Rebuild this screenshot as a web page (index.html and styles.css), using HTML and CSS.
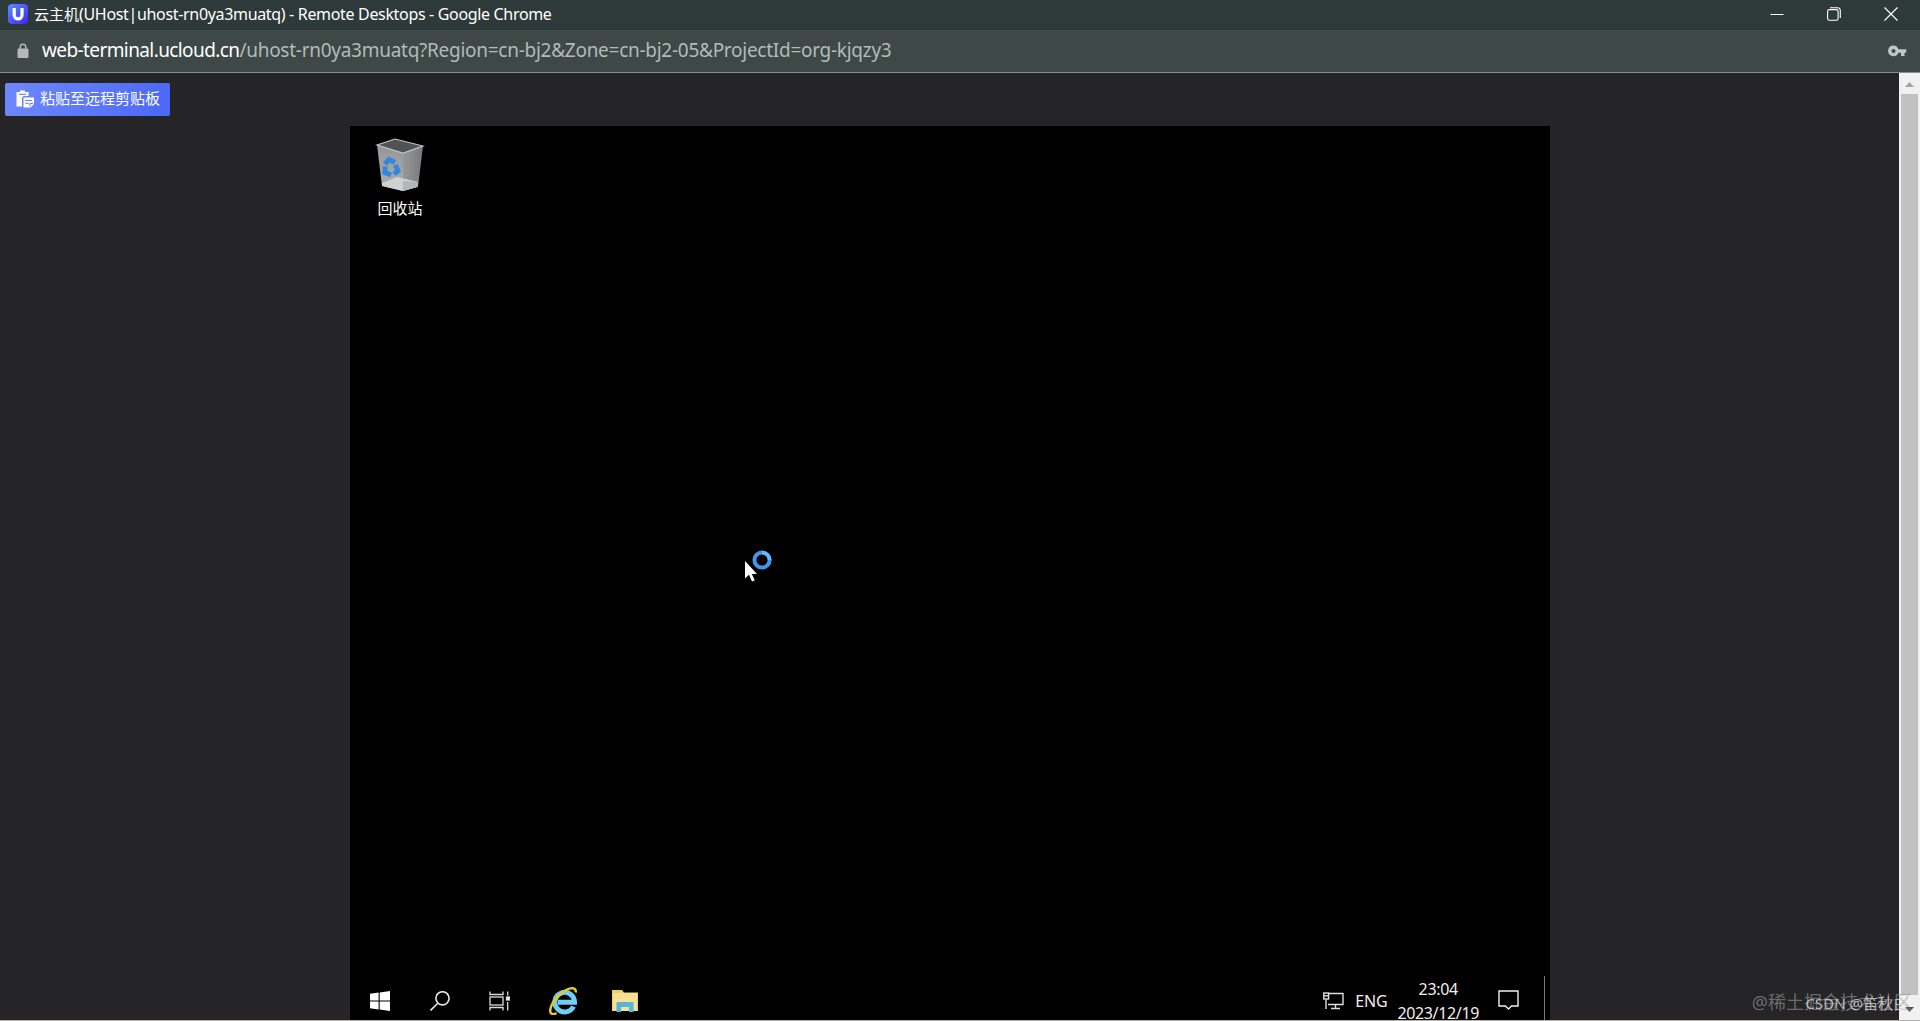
FILE: index.html
```html
<!DOCTYPE html>
<html lang="zh-CN">
<head>
  <meta charset="UTF-8">
  <title>云主机(UHost|uhost-rn0ya3muatq) - Remote Desktops</title>
  <link rel="stylesheet" href="styles.css">
</head>
<body>

  <div class="window">
    <header class="titlebar">
      <svg class="favicon" width="20" height="20" viewBox="0 0 20 20">
        <defs>
          <linearGradient id="logo" x1="0" y1="0" x2="1" y2="1">
            <stop offset="0" stop-color="#5c8cff"/>
            <stop offset="1" stop-color="#3a28f0"/>
          </linearGradient>
        </defs>
        <rect width="20" height="20" rx="4" fill="url(#logo)"/>
        <path d="M6.2 4v7a3.9 3.9 0 0 0 7.8 0V4" fill="none" stroke="#fff" stroke-width="3.2"/>
      </svg>
      <span class="title"><span class="title-zh">云主机</span><span class="title-en">(UHost|uhost-rn0ya3muatq) - Remote Desktops - Google Chrome</span></span>
      <div class="controls">
        <svg width="14" height="14" viewBox="0 0 14 14"><path d="M0.500 7.500h13" stroke="#fff" stroke-width="1"/></svg>
        <svg width="14" height="14" viewBox="0 0 14 14" fill="none" stroke="#fff" stroke-width="1.100"><rect x="0.600" y="2.600" width="10.500" height="10.700" rx="1.800"/><path d="M3 0.700h7.500a2.800 2.800 0 0 1 2.800 2.800v7.500"/></svg>
        <svg width="14" height="14" viewBox="0 0 14 14"><path d="M0.500 0.500l13 13M13.500 0.500l-13 13" stroke="#fff" stroke-width="1.200"/></svg>
      </div>
    </header>

    <div class="addressbar">
      <svg class="lock" width="12" height="16" viewBox="0 0 12 16">
        <rect x="0.500" y="5.500" width="11" height="9.500" rx="1.300" fill="#b2b9b9"/>
        <path d="M3.200 6V4a2.800 2.800 0 0 1 5.600 0v2" fill="none" stroke="#b2b9b9" stroke-width="1.500"/>
      </svg>
      <span class="url"><span class="host">web-terminal.ucloud.cn</span><span class="path">/uhost-rn0ya3muatq?Region=cn-bj2&amp;Zone=cn-bj2-05&amp;ProjectId=org-kjqzy3</span></span>
      <svg class="key" width="19" height="12" viewBox="0 0 19 12">
        <path fill="#c0c5c5" fill-rule="evenodd" d="M5.500 0.500a5.300 5.300 0 1 0 4.900 7.200H13V11h3.500V7.700h1.700V4.300h-7.800A5.300 5.300 0 0 0 5.500 0.500zM5.500 4a2 2 0 1 1 0 4 2 2 0 0 1 0-4z"/>
      </svg>
    </div>

    <main class="page">
      <div class="content">
        <button class="paste-btn">
          <svg width="19" height="18" viewBox="0 0 19 18">
            <path fill="#fff" d="M0.500 2h3.500V0.500h5V2h3.500v4H7.500L6 7.500v9H0.500z"/>
            <path d="M3 4.300h7" stroke="#6680fa" stroke-width="1.100"/>
            <path fill="#fff" d="M7.500 7.500H18v6.500l-3.500 3.500h-7z"/>
            <path d="M9.300 10.500h6.500M9.300 13.300h3.500M14 16.500v-3h3" fill="none" stroke="#5d78fa" stroke-width="1"/>
          </svg>
          <span>粘贴至远程剪贴板</span>
        </button>

        <section class="desktop">
          <div class="recycle">
            <svg width="50" height="56" viewBox="0 0 50 56">
              <defs>
                <linearGradient id="binLeft" x1="0" y1="0" x2="0" y2="1">
                  <stop offset="0" stop-color="#949698"/>
                  <stop offset="1" stop-color="#adb0b2"/>
                </linearGradient>
                <linearGradient id="binRight" x1="0" y1="0" x2="1" y2="0">
                  <stop offset="0" stop-color="#96989a"/>
                  <stop offset="1" stop-color="#77797c"/>
                </linearGradient>
              </defs>
              <path d="M2 7L28 15 28 53 7 48z" fill="url(#binLeft)"/>
              <path d="M28 15L48 8 43 49 28 53z" fill="url(#binRight)"/>
              <path d="M2 7L20 1 48 8 28 15z" fill="#505254" stroke="#c4c6c8" stroke-width="1.200"/>
              <path d="M7 45L22 39 43 44 42 49 28 53 7 48z" fill="#cfd1d3"/>
              <path d="M28 43v10l14-4 1-5z" fill="#b4b7b9"/>
              <g fill="none" stroke="#3088dc" stroke-width="5">
                <path d="M10 26l4-4.500 6 3"/>
                <path d="M20.500 27l2.500 6-4 3"/>
                <path d="M16 37l-6-2.500v-6"/>
              </g>
            </svg>
            <span>回收站</span>
          </div>

          <!-- busy pointer -->
          <svg class="cursor" width="30" height="34" viewBox="0 0 30 34">
            <circle cx="18" cy="11" r="7.600" fill="none" stroke="#4197ec" stroke-width="4"/>
            <path d="M18 3.400a7.600 7.600 0 0 1 7.600 7.600" fill="none" stroke="#64bafa" stroke-width="3.500"/>
            <path d="M1 12v17.500l4-3.700 3 6.700 2.800-1.300-3-6.200H13z" fill="#fff"/>
          </svg>

          <div class="taskbar">
            <div class="apps">
              <svg width="20" height="20" viewBox="0 0 20 20" fill="#fff"><path d="M0 2.800l8.600-1.200v7.900H0zM9.700 1.400L20 0v9.500H9.700zM0 10.600h8.600v7.900L0 17.300zM9.700 10.600H20V20L9.700 18.600z"/></svg>
              <svg width="20" height="20" viewBox="0 0 20 20" fill="none" stroke="#e6e6e6" stroke-width="1.600"><circle cx="12.500" cy="7.300" r="6.600"/><path d="M7.800 12.200L0.500 19.500"/></svg>
              <svg width="21" height="20" viewBox="0 0 21 20" fill="none" stroke="#dcdcdc" stroke-width="1.300"><path d="M1 0.500v3h13v-3M1 19.500v-3h13v3"/><rect x="1" y="6" width="13" height="8"/><path d="M18.700 0.500v4M18.700 11v8.500"/><rect x="17.500" y="6" width="3" height="3" fill="#fff"/></svg>
              <svg width="28" height="28" viewBox="0 0 28 28">
                <path d="M24.500 19.500a9.800 9.800 0 1 1 1-4.300H9" fill="none" stroke="#71cdf6" stroke-width="5"/>
                <path d="M7.500 26C4.500 28 0.500 27.500 1.300 22.500 2.500 15 10 6.500 17.500 2.800 21.500 0.800 27.500 0 26.700 5.500" fill="none" stroke="#e5c821" stroke-width="2.500"/>
              </svg>
              <svg width="28" height="24" viewBox="0 0 28 24">
                <path d="M1 1h10l2 2.500h14V22H1z" fill="#efcd69"/>
                <path d="M2 4h24v18H2z" fill="#f9df93"/>
                <path d="M5.500 23V13h17v10H18v-5h-8v5z" fill="#55b5df"/>
              </svg>
            </div>
            <div class="tray">
              <svg width="21" height="18" viewBox="0 0 21 18" fill="none" stroke="#dedede" stroke-width="1.400"><path d="M6 1.500h14v11H5M12.500 12.500v4M8 16.500h9M3 7.500V17"/><rect x="0.800" y="1" width="4.800" height="6"/><path d="M1 3.800h4"/></svg>
              <span class="lang">ENG</span>
              <div class="clock"><span>23:04</span><span>2023/12/19</span></div>
              <svg width="21" height="21" viewBox="0 0 21 21" fill="none" stroke="#f0f0f0" stroke-width="1.400"><path d="M1 1h19v15h-6.500L10.500 19l-3-3H1z"/></svg>
            </div>
            <span class="peek"></span>
          </div>
        </section>
      </div>

      <div class="scrollbar">
        <svg width="9" height="5" viewBox="0 0 9 5"><path d="M4.500 0L9 5H0z" fill="#a3a3a3"/></svg>
        <div class="thumb"></div>
        <svg width="9" height="5" viewBox="0 0 9 5"><path d="M0 0h9L4.500 5z" fill="#505050"/></svg>
      </div>
    </main>
  </div>

  <span class="mark mark-juejin">@稀土掘金技术社区</span>
  <span class="mark mark-csdn">CSDN @笛秋白</span>

</body>
</html>
```

FILE: styles.css
```css
* {
  box-sizing: border-box;
}

body {
  margin: 0;
  overflow: hidden;
  background: #252527;
  color: #fff;
  font-family: "Noto Sans", "Noto Sans CJK SC", sans-serif;
}

svg {
  display: block;
  flex: none;
}

.window {
  display: flex;
  flex-direction: column;
  height: 1021px;
  border-bottom: 1px solid #b5b2ad;
}

.titlebar {
  display: flex;
  align-items: center;
  height: 30px;
  padding: 0 22px 2px 8px;
  background: #2e3939;
}

.title {
  display: flex;
  align-items: center;
  margin-left: 6px;
  font-size: 16px;
  line-height: 20px;
  white-space: nowrap;
}

.title-zh {
  font-size: 15px;
}

.title-en {
  letter-spacing: -0.33px;
}

.controls {
  display: flex;
  gap: 43px;
  margin-left: auto;
}

.addressbar {
  display: flex;
  align-items: center;
  height: 43px;
  padding: 0 13px 0 17px;
  background: #3d4847;
  border-bottom: 1px solid #8a8e8e;
}

.url {
  margin-left: 13px;
  padding-bottom: 2px;
  font-size: 19px;
  line-height: 24px;
  white-space: nowrap;
}

.host {
  letter-spacing: -0.6px;
}

.path {
  color: #b3baba;
  letter-spacing: -0.27px;
}

.key {
  margin-left: auto;
}

.page {
  display: flex;
  flex: 1;
  min-height: 0;
}

.content {
  display: flex;
  flex: 1;
  flex-direction: column;
  padding: 10px 0 0 5px;
}

.paste-btn {
  display: flex;
  align-items: center;
  align-self: flex-start;
  gap: 5px;
  width: 165px;
  height: 33px;
  padding: 0 0 2px 11px;
  border: none;
  border-radius: 2px;
  background: linear-gradient(100deg, #6e88fb, #4b68f8);
  color: #fff;
  font-family: "Noto Sans CJK SC", sans-serif;
  font-size: 15px;
  white-space: nowrap;
}

.paste-btn span {
  padding-bottom: 2px;
}

.desktop {
  position: relative;
  display: flex;
  flex: 1;
  flex-direction: column;
  justify-content: space-between;
  width: 1200px;
  margin: 10px 0 0 345px;
  background: #000;
}

.recycle {
  display: flex;
  flex-direction: column;
  align-items: center;
  width: 100px;
  padding-top: 12px;
  font-size: 15px;
  line-height: 20px;
}

.recycle span {
  margin-top: 4px;
}

.cursor {
  position: absolute;
  left: 394px;
  top: 423px;
}

.taskbar {
  display: flex;
  height: 44px;
}

.apps {
  display: flex;
  align-items: center;
  padding: 5px 0 0 20px;
}

.apps svg:nth-child(2) {
  margin-left: 40px;
}

.apps svg:nth-child(3) {
  margin-left: 39px;
}

.apps svg:nth-child(4) {
  margin-left: 39px;
}

.apps svg:nth-child(5) {
  margin-left: 34px;
}

.tray {
  display: flex;
  align-items: center;
  margin-left: auto;
  padding-top: 5px;
}

.lang {
  margin-left: 11px;
  color: #eee;
  font-size: 16px;
  letter-spacing: -0.2px;
}

.clock {
  display: flex;
  flex-direction: column;
  align-items: center;
  margin: 0 19px 0 10px;
  color: #eee;
  font-size: 16px;
  letter-spacing: -0.35px;
  line-height: 24px;
}

.peek {
  width: 1px;
  margin: 0 5px 0 25px;
  background: #777;
}

.scrollbar {
  display: flex;
  flex-direction: column;
  align-items: center;
  width: 21px;
  padding: 9px 0 8px;
  background: #f1f1f1;
}

.thumb {
  flex: 1;
  width: 17px;
  margin: 7px 0 12px;
  background: #c1c1c1;
}

/* overlapping corner marks */
.mark {
  position: absolute;
  line-height: 24px;
  white-space: nowrap;
}

.mark-juejin {
  right: 8px;
  top: 990px;
  color: rgba(150, 150, 150, 0.65);
  font-size: 18px;
}

.mark-csdn {
  right: 12px;
  top: 991px;
  color: rgba(225, 225, 225, 0.75);
  font-size: 15px;
}
```
